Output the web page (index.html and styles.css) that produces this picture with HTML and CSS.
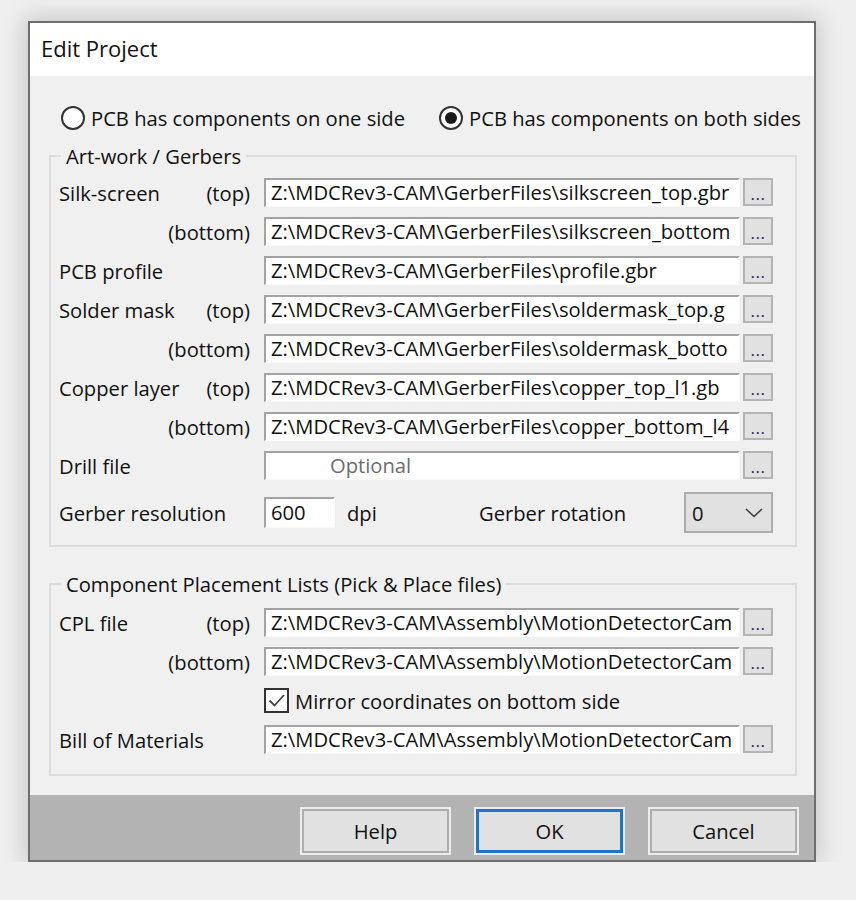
FILE: index.html
```html
<!DOCTYPE html>
<html lang="en">
<head>
<meta charset="utf-8">
<title>Edit Project</title>
<link rel="stylesheet" href="styles.css">
</head>
<body>
<div class="window">
  <div class="titlebar">Edit Project</div>
  <div class="content">
    <div class="radios">
      <div class="radio"><span class="rb"></span><span>PCB has components on one side</span></div>
      <div class="radio second"><span class="rb on"></span><span>PCB has components on both sides</span></div>
    </div>

    <fieldset class="group g1">
      <legend>Art-work / Gerbers</legend>
      <div class="rows">
        <div class="lbl"><span>Silk-screen</span><span>(top)</span></div>
        <div class="field">Z:\MDCRev3-CAM\GerberFiles\silkscreen_top.gbr</div>
        <div class="browse">...</div>

        <div class="lbl"><span></span><span>(bottom)</span></div>
        <div class="field">Z:\MDCRev3-CAM\GerberFiles\silkscreen_bottom</div>
        <div class="browse">...</div>

        <div class="lbl"><span>PCB profile</span><span></span></div>
        <div class="field">Z:\MDCRev3-CAM\GerberFiles\profile.gbr</div>
        <div class="browse">...</div>

        <div class="lbl"><span>Solder mask</span><span>(top)</span></div>
        <div class="field">Z:\MDCRev3-CAM\GerberFiles\soldermask_top.g</div>
        <div class="browse">...</div>

        <div class="lbl"><span></span><span>(bottom)</span></div>
        <div class="field">Z:\MDCRev3-CAM\GerberFiles\soldermask_botto</div>
        <div class="browse">...</div>

        <div class="lbl"><span>Copper layer</span><span>(top)</span></div>
        <div class="field">Z:\MDCRev3-CAM\GerberFiles\copper_top_l1.gb</div>
        <div class="browse">...</div>

        <div class="lbl"><span></span><span>(bottom)</span></div>
        <div class="field">Z:\MDCRev3-CAM\GerberFiles\copper_bottom_l4</div>
        <div class="browse">...</div>

        <div class="lbl"><span>Drill file</span><span></span></div>
        <div class="field placeholder">Optional</div>
        <div class="browse">...</div>
      </div>
      <div class="resrow">
        <div class="reslabel">Gerber resolution</div>
        <div class="field small">600</div>
        <div class="dpi">dpi</div>
        <div class="rotlabel">Gerber rotation</div>
        <div class="select"><span>0</span>
          <svg class="chev" width="18" height="10" viewBox="0 0 18 10"><path d="M1 1 L9 8.5 L17 1" fill="none" stroke="#3c3c3c" stroke-width="1.6"/></svg>
        </div>
      </div>
    </fieldset>

    <fieldset class="group g2">
      <legend>Component Placement Lists (Pick &amp; Place files)</legend>
      <div class="rows">
        <div class="lbl"><span>CPL file</span><span>(top)</span></div>
        <div class="field">Z:\MDCRev3-CAM\Assembly\MotionDetectorCam</div>
        <div class="browse">...</div>

        <div class="lbl"><span></span><span>(bottom)</span></div>
        <div class="field">Z:\MDCRev3-CAM\Assembly\MotionDetectorCam</div>
        <div class="browse">...</div>

        <div class="lbl"></div>
        <div class="check"><span class="cb"><svg width="21" height="21" viewBox="0 0 21 21"><path d="M3.5 10.5 L8.5 15.5 L18 5" fill="none" stroke="#444" stroke-width="1.8"/></svg></span><span>Mirror coordinates on bottom side</span></div>

        <div class="lbl"><span>Bill of Materials</span><span></span></div>
        <div class="field">Z:\MDCRev3-CAM\Assembly\MotionDetectorCam</div>
        <div class="browse">...</div>
      </div>
    </fieldset>
  </div>
  <div class="footer">
    <div class="btn">Help</div>
    <div class="btn default">OK</div>
    <div class="btn">Cancel</div>
  </div>
</div>
</body>
</html>
```

FILE: styles.css
```css
html, body {
  margin: 0;
  padding: 0;
  background: #efefef;
}
body {
  font-family: "Open Sans", "Noto Sans", sans-serif;
  font-size: 20.2px;
  color: #111;
}
.window {
  margin: 21px 0 0 28px;
  width: 788px;
  height: 841px;
  box-sizing: border-box;
  border: 2px solid #6e6e6e;
  background: #f0f0f0;
  display: flex;
  flex-direction: column;
  box-shadow: 0 0 22px 4px rgba(0, 0, 0, 0.16);
}
.titlebar {
  height: 53px;
  flex: none;
  background: #fff;
  padding-left: 11px;
  font-size: 22px;
  line-height: 50px;
  color: #111;
}
.content {
  flex: 1;
  padding: 29px 17px 0 19px;
}
.radios {
  display: flex;
  height: 26px;
  align-items: center;
  padding-left: 12px;
  white-space: nowrap;
}
.radio {
  display: flex;
  align-items: center;
  line-height: 26px;
  flex: none;
}
.radio.second {
  margin-left: 34px;
}
.rb {
  width: 20px;
  height: 20px;
  border: 2px solid #333;
  border-radius: 50%;
  background: #fff;
  margin-right: 6px;
  position: relative;
  flex: none;
}
.rb.on::after {
  content: "";
  position: absolute;
  left: 4px;
  top: 4px;
  width: 12px;
  height: 12px;
  border-radius: 50%;
  background: #1a1a1a;
}
.group {
  margin: 12px 0 0 0;
  border: 2px solid #dcdcdc;
  padding: 9px 22px 12px 8px;
  min-width: 0;
}
.group legend {
  padding: 0 5px;
  margin-left: 2px;
  line-height: 26px;
}
.g2 {
  margin-top: 24px;
  padding-top: 11px;
  padding-bottom: 20px;
}
.rows {
  display: grid;
  grid-template-columns: 205px 476px 33px;
  grid-auto-rows: 29px;
  row-gap: 10px;
}
.lbl {
  display: flex;
  justify-content: space-between;
  align-items: center;
  padding-right: 14px;
  white-space: nowrap;
}
.field {
  box-sizing: border-box;
  height: 29px;
  background: #fff;
  border-top: 2px solid #a3a3a3;
  border-left: 2px solid #a3a3a3;
  border-right: 2px solid #fafafa;
  border-bottom: 1px solid #fafafa;
  padding-left: 5px;
  line-height: 25px;
  white-space: nowrap;
  overflow: hidden;
}
.field.placeholder {
  color: #6d6d6d;
  padding-left: 64px;
}
.browse {
  box-sizing: border-box;
  margin-left: 3px;
  width: 30px;
  height: 28px;
  background: #e1e1e1;
  border: 2px solid #b4b4b4;
  color: #1e1e5a;
  font-size: 17px;
  line-height: 28px;
  text-align: center;
  letter-spacing: 0.5px;
}
.resrow {
  display: flex;
  align-items: center;
  margin-top: 12px;
  height: 41px;
}
.reslabel {
  width: 205px;
}
.field.small {
  width: 71px;
  height: 31px;
  line-height: 27px;
}
.dpi {
  margin-left: 12px;
  width: 132px;
}
.rotlabel {
  flex: 1;
}
.select {
  box-sizing: border-box;
  width: 89px;
  height: 41px;
  background: #e1e1e1;
  border: 2px solid #adadad;
  display: flex;
  align-items: center;
  justify-content: space-between;
  padding: 0 8px 0 6px;
}
.chev {
  display: block;
}
.check {
  grid-column: 2 / 4;
  display: flex;
  align-items: center;
}
.cb {
  box-sizing: border-box;
  width: 25px;
  height: 25px;
  border: 2px solid #333;
  background: #fff;
  margin-right: 6px;
  display: flex;
  align-items: center;
  justify-content: center;
}
.cb svg {
  display: block;
}
.footer {
  height: 65px;
  flex: none;
  background: #b3b3b3;
  display: flex;
  justify-content: flex-end;
  gap: 27px;
  padding: 14px 17px 0 0;
  box-sizing: border-box;
}
.btn {
  box-sizing: border-box;
  width: 147px;
  height: 44px;
  background: #e1e1e1;
  border: 2px solid #adadad;
  box-shadow: 0 0 0 2px #ececec;
  text-align: center;
  line-height: 40px;
}
.btn.default {
  border: 3px solid #1a74d0;
  line-height: 38px;
}
```
